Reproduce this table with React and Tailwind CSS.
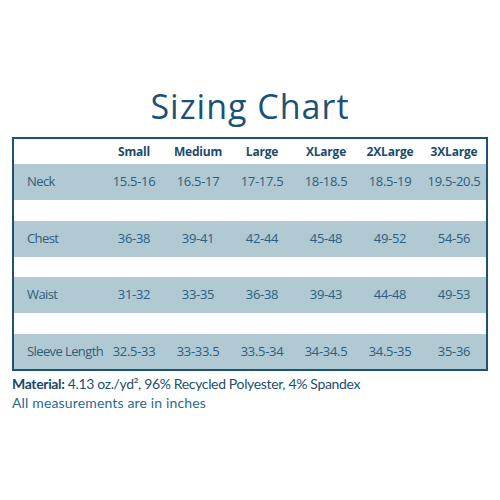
export default function App() {
  const cols = ["Small", "Medium", "Large", "XLarge", "2XLarge", "3XLarge"];
  const rows = [
    { label: "Neck", vals: ["15.5-16", "16.5-17", "17-17.5", "18-18.5", "18.5-19", "19.5-20.5"], h: "h-[36px]" },
    { label: "Chest", vals: ["36-38", "39-41", "42-44", "45-48", "49-52", "54-56"], h: "h-[36px]" },
    { label: "Waist", vals: ["31-32", "33-35", "36-38", "39-43", "44-48", "49-53"], h: "h-[36px]" },
    { label: "Sleeve Length", vals: ["32.5-33", "33-33.5", "33.5-34", "34-34.5", "34.5-35", "35-36"], h: "h-[35px]" },
  ];
  const gaps = ["h-[21px]", "h-[20px]", "h-[21px]"];
  return (
    <div className="w-[500px] h-[500px] bg-white" style={{ fontFamily: '"Open Sans", sans-serif' }}>
      <div className="pt-[84px] text-center text-[34px] leading-[44px] text-[#1b5274] tracking-[1px]">
        Sizing Chart
      </div>
      <div className="mx-[12px] mt-[9px] border-2 border-[#1d5272]">
        <div className="grid grid-cols-[88px_repeat(6,1fr)] h-[25px] items-center text-[12px] font-bold text-[#1c4a6b]">
          <div></div>
          {cols.map((c) => (
            <div key={c} className="text-center tracking-[-0.2px]">{c}</div>
          ))}
        </div>
        {rows.map((r, i) => (
          <div key={r.label}>
            <div className={`grid grid-cols-[88px_repeat(6,1fr)] ${r.h} items-center bg-[#b0c9d3] text-[13px] text-[#2d5e7d]`}>
              <div className="pl-[13px] whitespace-nowrap tracking-[-0.6px]">{r.label}</div>
              {r.vals.map((v, j) => (
                <div key={j} className="text-center whitespace-nowrap tracking-[-0.3px]">{v}</div>
              ))}
            </div>
            {i < 3 && <div className={gaps[i]}></div>}
          </div>
        ))}
      </div>
      <div className="px-[12px] pt-[3px] text-[14px] leading-[19px]" style={{ fontFamily: 'Lato, sans-serif' }}>
        <div className="text-[#1d4f70] tracking-[-0.35px] whitespace-nowrap">
          <span className="font-bold text-[#1a4767]">Material:</span> 4.13 oz./yd², 96% Recycled Polyester, 4% Spandex
        </div>
        <div className="text-[#2b6a8f] tracking-[0.15px]">All measurements are in inches</div>
      </div>
    </div>
  );
}
